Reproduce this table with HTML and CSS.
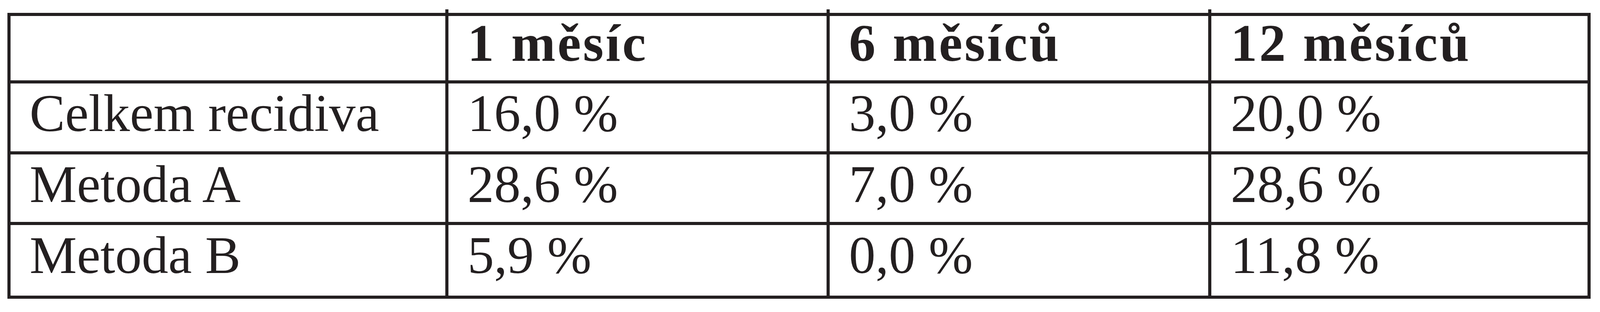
FILE: index.html
```html
<!DOCTYPE html>
<html lang="cs">
<head>
<meta charset="utf-8">
<title>Recidiva</title>
<link rel="stylesheet" href="styles.css">
</head>
<body>
<table class="results">
  <thead>
    <tr class="row-head">
      <th class="col-label"></th>
      <th class="col-1 tick">1 měsíc</th>
      <th class="col-2 tick">6 měsíců</th>
      <th class="col-3 tick">12 měsíců</th>
    </tr>
  </thead>
  <tbody>
    <tr class="row-1">
      <td>Celkem recidiva</td>
      <td>16,0 %</td>
      <td>3,0 %</td>
      <td>20,0 %</td>
    </tr>
    <tr class="row-2">
      <td>Metoda A</td>
      <td>28,6 %</td>
      <td>7,0 %</td>
      <td>28,6 %</td>
    </tr>
    <tr class="row-3">
      <td>Metoda B</td>
      <td>5,9 %</td>
      <td>0,0 %</td>
      <td>11,8 %</td>
    </tr>
  </tbody>
</table>
</body>
</html>
```

FILE: styles.css
```css
html, body {
  margin: 0;
  padding: 0;
  background: #ffffff;
}

body {
  font-family: "Liberation Serif", "Times New Roman", serif;
  color: #231f20;
}

/* proportions taken from the 7258px wide layout:
   33px left gap, 7183px table, 42px right gap */
.results {
  margin: 33px 0 0 0.4547vw;
  width: 98.967vw;
  table-layout: fixed;
  border-collapse: separate;
  border-spacing: 0;
  border-top: 8px solid #231f20;
  border-left: 8px solid #231f20;
}

.results th,
.results td {
  box-sizing: border-box;
  border-right: 8px solid #231f20;
  border-bottom: 8px solid #231f20;
  padding: 8px 0 0 1.2vw;
  vertical-align: top;
  text-align: left;
  font-size: 136px;
  line-height: 136px;
  white-space: nowrap;
}

.results th {
  font-weight: bold;
  letter-spacing: 5px;
  padding-top: 1px;
  position: relative;
}

.col-label { width: 27.676%; }
.col-1 { width: 24.112%; }
.col-2 { width: 24.126%; }
.col-3 { width: 23.973%; }

/* short stubs of the column rules poking above the top border */
.tick::before {
  content: "";
  position: absolute;
  left: -8px;
  top: -17px;
  width: 8px;
  height: 9px;
  background: #231f20;
}

.row-head th { height: 173px; }
.row-1 td { height: 182px; }
.row-2 td { height: 181px; }
.row-3 td { height: 189px; padding-top: 9px; }
```
